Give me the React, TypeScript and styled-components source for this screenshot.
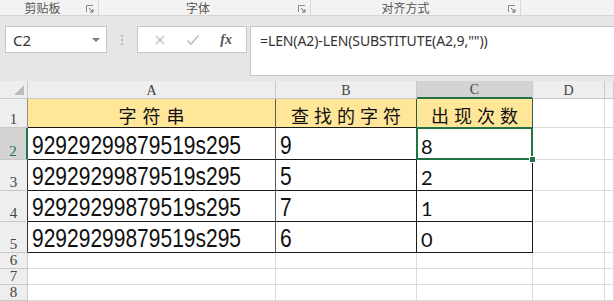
import React from "react";
import styled, { createGlobalStyle, css } from "styled-components";

const Global = createGlobalStyle`
  html, body { margin: 0; padding: 0; background: #e6e6e6; overflow: hidden; }
  body { width: 614px; height: 301px; font-family: "Noto Sans", "Noto Sans CJK SC", sans-serif; }
`;

const Page = styled.div`
  width: 614px;
  height: 301px;
  overflow: hidden;
  display: flex;
  flex-direction: column;
  background: #e6e6e6;
`;

/* ---------- ribbon group labels ---------- */
const RibbonLabels = styled.div`
  height: 17px;
  display: flex;
  align-items: flex-start;
  background: #f3f3f3;
  border-bottom: 1px solid #d5d5d5;
  box-sizing: border-box;
`;

const Group = styled.div<{ $w: number }>`
  width: ${(p) => p.$w}px;
  flex: none;
  display: flex;
  align-items: flex-start;
  border-right: 1px solid #d8d8d8;
  box-sizing: border-box;
  height: 15px;
`;

const GroupLabel = styled.div<{ $shift?: number }>`
  flex: 1;
  text-align: center;
  font-family: "Noto Sans CJK SC", sans-serif;
  font-size: 12px;
  line-height: 16px;
  height: 16px;
  color: #555;
  padding-right: ${(p) => p.$shift || 0}px;
`;

const Launcher = styled.svg`
  width: 8px;
  height: 8px;
  margin: 5px 4px 0 1px;
  flex: none;
`;

const LauncherIcon = () => (
  <Launcher viewBox="0 0 8 8">
    <path d="M0.5 7V0.5H7" stroke="#8a8a8a" fill="none" strokeWidth="1" />
    <path d="M3 3L7 7M7 4V7H4" stroke="#6d6d6d" fill="none" strokeWidth="1" />
  </Launcher>
);

/* ---------- formula bar ---------- */
const FormulaBar = styled.div`
  height: 70px;
  display: flex;
  align-items: flex-start;
  padding-top: 10px;
  box-sizing: border-box;
`;

const NameBox = styled.div`
  margin-left: 5px;
  width: 102px;
  height: 27px;
  background: #fff;
  border: 1px solid #c6c6c6;
  box-sizing: border-box;
  display: flex;
  align-items: center;
  justify-content: space-between;
  padding: 0 6px 0 7px;
  font-family: "Noto Sans", sans-serif;
  font-size: 15px;
  color: #333;
`;

const DropArrow = styled.span`
  width: 0;
  height: 0;
  border-left: 4px solid transparent;
  border-right: 4px solid transparent;
  border-top: 4px solid #7a7a7a;
`;

const Dots = styled.div`
  width: 30px;
  height: 27px;
  display: flex;
  flex-direction: column;
  align-items: center;
  justify-content: center;
  gap: 2px;
  & > span {
    width: 2px;
    height: 2px;
    background: #bdbdbd;
  }
`;

const FxBox = styled.div`
  width: 110px;
  height: 27px;
  background: #fff;
  border: 1px solid #c6c6c6;
  box-sizing: border-box;
  display: flex;
  align-items: center;
  justify-content: space-around;
  padding: 0 4px 0 6px;
`;

const FxText = styled.span`
  font-family: "Liberation Serif", serif;
  font-style: italic;
  font-weight: bold;
  font-size: 14px;
  color: #555;
`;

const FormulaInput = styled.div`
  margin-left: 3px;
  flex: 1;
  height: 50px;
  background: #fff;
  border: 1px solid #c6c6c6;
  border-right: none;
  box-sizing: border-box;
  padding: 5px 9px;
  font-family: "Noto Sans", sans-serif;
  font-size: 14px;
  letter-spacing: -0.1px;
  line-height: 18px;
  color: #333;
`;

/* ---------- sheet ---------- */
const Sheet = styled.div`
  flex: 1;
  display: grid;
  grid-template-columns: 28px 248px 141px 116px 72px 1fr;
  grid-template-rows: 18px 29px 32px 31px 31px 31px 16px 16px 16px;
  background: #fff;
`;

type CellKind = "corner" | "colHead" | "rowHead" | "cell";

const Cell = styled.div<{
  $kind: CellKind;
  $right?: string;
  $bottom?: string;
  $bg?: string;
  $align?: "left" | "center";
}>`
  box-sizing: border-box;
  position: relative;
  display: flex;
  align-items: flex-end;
  overflow: hidden;
  white-space: nowrap;
  border-right: 1px solid ${(p) => p.$right || "#dadada"};
  border-bottom: 1px solid ${(p) => p.$bottom || "#dadada"};
  background: ${(p) => p.$bg || "#fff"};
  justify-content: ${(p) => (p.$align === "center" ? "center" : "flex-start")};
  ${(p) =>
    p.$kind === "colHead" &&
    css`
      align-items: center;
      justify-content: center;
      font-family: "Liberation Serif", serif;
      font-size: 14px;
      color: #444;
      padding-top: 2px;
    `}
  ${(p) =>
    p.$kind === "rowHead" &&
    css`
      justify-content: center;
      font-family: "Liberation Serif", serif;
      font-size: 15px;
      line-height: 15px;
      color: #444;
    `}
`;

const Corner = styled.div`
  position: absolute;
  right: 3px;
  bottom: 3px;
  width: 0;
  height: 0;
  border-left: 10px solid transparent;
  border-bottom: 10px solid #bcbcbc;
`;

const Handle = styled.div`
  position: absolute;
  right: -4px;
  bottom: -4px;
  width: 5px;
  height: 5px;
  background: #217346;
  border: 1px solid #fff;
  z-index: 3;
`;

const SelBox = styled.div`
  position: absolute;
  left: -1px;
  top: -1px;
  right: -1px;
  bottom: -1px;
  border: 2px solid #217346;
  z-index: 2;
  pointer-events: none;
`;

const HeadText = styled.span<{ $sp: number }>`
  font-family: "Noto Sans CJK SC", serif;
  font-size: 18px;
  line-height: 22px;
  letter-spacing: ${(p) => p.$sp}px;
  margin-right: -${(p) => p.$sp}px;
  color: #111;
  padding-bottom: 1px;
`;

const NarrowText = styled.span`
  display: inline-block;
  font-family: "Liberation Sans", Arial, sans-serif;
  font-size: 25px;
  line-height: 25px;
  color: #111;
  transform: scaleX(0.84);
  transform-origin: left bottom;
  margin-left: 4px;
  padding-bottom: 1px;
`;

const CountText = styled.span`
  font-family: "Lato", "Open Sans", sans-serif;
  font-size: 20px;
  line-height: 22px;
  color: #111;
  margin-left: 4px;
  padding-bottom: 2px;
`;

const ROW_NUMS = [1, 2, 3, 4, 5, 6, 7, 8];
const DATA = [
  { a: "92929299879519s295", b: "9", c: "8" },
  { a: "92929299879519s295", b: "5", c: "2" },
  { a: "92929299879519s295", b: "7", c: "1" },
  { a: "92929299879519s295", b: "6", c: "0" },
];

const HEAD_BG = "#eeeeee";
const HEAD_LINE = "#c9c9c9";
const BLACK = "#1a1a1a";
const GREEN = "#217346";
const DARK_GREEN = "#2d5e3c";

export default function App() {
  return (
    <Page>
      <Global />
      <RibbonLabels>
        <Group $w={99}>
          <GroupLabel>剪贴板</GroupLabel>
          <LauncherIcon />
        </Group>
        <Group $w={212}>
          <GroupLabel>字体</GroupLabel>
          <LauncherIcon />
        </Group>
        <Group $w={210}>
          <GroupLabel $shift={7}>对齐方式</GroupLabel>
          <LauncherIcon />
        </Group>
      </RibbonLabels>

      <FormulaBar>
        <NameBox>
          <span>C2</span>
          <DropArrow />
        </NameBox>
        <Dots>
          <span />
          <span />
          <span />
        </Dots>
        <FxBox>
          <svg width="12" height="12" viewBox="0 0 12 12">
            <path d="M2 2L10 10M10 2L2 10" stroke="#bcbcbc" strokeWidth="1.3" />
          </svg>
          <svg width="14" height="12" viewBox="0 0 14 12">
            <path d="M1.5 6.5L5 10L12.5 1.5" stroke="#bcbcbc" strokeWidth="1.6" fill="none" />
          </svg>
          <FxText>fx</FxText>
        </FxBox>
        <FormulaInput>=LEN(A2)-LEN(SUBSTITUTE(A2,9,""))</FormulaInput>
      </FormulaBar>

      <Sheet>
        {/* column header row */}
        <Cell $kind="corner" $bg={HEAD_BG} $right={HEAD_LINE} $bottom={HEAD_LINE}>
          <Corner />
        </Cell>
        <Cell $kind="colHead" $bg={HEAD_BG} $right={HEAD_LINE} $bottom={HEAD_LINE}>A</Cell>
        <Cell $kind="colHead" $bg={HEAD_BG} $right={HEAD_LINE} $bottom={HEAD_LINE}>B</Cell>
        <Cell $kind="colHead" $bg="#d3d3d3" $right={HEAD_LINE} $bottom={GREEN} style={{ borderBottomWidth: 2 }}>C</Cell>
        <Cell $kind="colHead" $bg={HEAD_BG} $right={HEAD_LINE} $bottom={HEAD_LINE}>D</Cell>
        <Cell $kind="colHead" $bg={HEAD_BG} $right={HEAD_LINE} $bottom={HEAD_LINE} />

        {/* row 1: headers */}
        <Cell $kind="rowHead" $bg={HEAD_BG} $right="#8f8f8f" $bottom={HEAD_LINE}>1</Cell>
        <Cell $kind="cell" $bg="#ffe699" $right="#5a5a5a" $bottom={BLACK} $align="center">
          <HeadText $sp={6}>字符串</HeadText>
        </Cell>
        <Cell $kind="cell" $bg="#ffe699" $right={DARK_GREEN} $bottom={BLACK} $align="center">
          <HeadText $sp={5}>查找的字符</HeadText>
        </Cell>
        <Cell $kind="cell" $bg="#ffe699" $right={DARK_GREEN} $bottom={BLACK} $align="center">
          <HeadText $sp={5}>出现次数</HeadText>
        </Cell>
        <Cell $kind="cell" />
        <Cell $kind="cell" />

        {/* data rows */}
        {DATA.map((r, i) => {
          const rowNum = i + 2;
          const sel = rowNum === 2;
          return (
            <React.Fragment key={rowNum}>
              <Cell
                $kind="rowHead"
                $bg={sel ? "#d3d3d3" : HEAD_BG}
                $right={sel ? GREEN : "#333"}
                $bottom={HEAD_LINE}
                style={sel ? { color: GREEN, borderRightWidth: 2 } : undefined}
              >
                {rowNum}
              </Cell>
              <Cell $kind="cell" $right="#5a5a5a" $bottom={BLACK}>
                <NarrowText>{r.a}</NarrowText>
              </Cell>
              <Cell $kind="cell" $right={BLACK} $bottom={BLACK}>
                <NarrowText>{r.b}</NarrowText>
              </Cell>
              <Cell $kind="cell" $right={BLACK} $bottom={BLACK} style={sel ? { overflow: "visible" } : undefined}>
                <CountText>{r.c}</CountText>
                {sel && (
                  <>
                    <SelBox />
                    <Handle />
                  </>
                )}
              </Cell>
              <Cell $kind="cell" />
              <Cell $kind="cell" />
            </React.Fragment>
          );
        })}

        {/* empty rows */}
        {ROW_NUMS.slice(5).map((n) => (
          <React.Fragment key={n}>
            <Cell $kind="rowHead" $bg={HEAD_BG} $right={HEAD_LINE} $bottom={HEAD_LINE}>{n}</Cell>
            <Cell $kind="cell" />
            <Cell $kind="cell" />
            <Cell $kind="cell" />
            <Cell $kind="cell" />
            <Cell $kind="cell" />
          </React.Fragment>
        ))}
      </Sheet>
    </Page>
  );
}
